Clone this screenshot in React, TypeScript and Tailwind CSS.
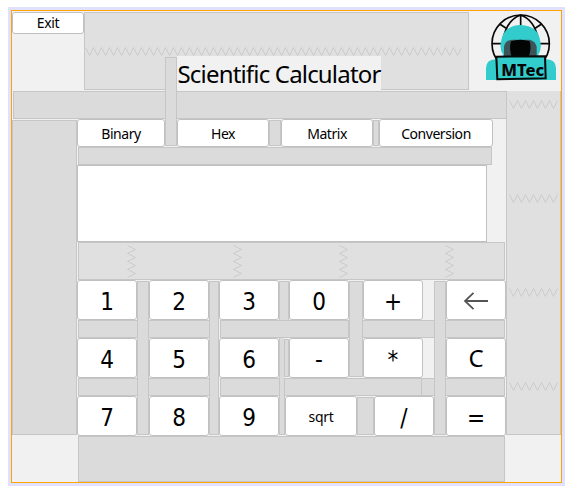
import React from "react";

type SpringProps = { className?: string };

const line = "border-[#c6c6c6]";

/** Horizontal resize spring drawn as a zigzag line. */
function HSpring({ teeth, className = "" }: SpringProps & { teeth: number }) {
  const points: string[] = [];
  for (let i = 0; i <= teeth * 2; i++) {
    points.push(`${i * 4 + 0.5},${i % 2 === 0 ? 0.5 : 8.5}`);
  }
  return (
    <svg className={`block shrink-0 ${className}`} width={teeth * 8 + 1} height={9} fill="none" stroke="#cbcbcb">
      <polyline points={points.join(" ")} />
    </svg>
  );
}

/** Vertical resize spring drawn as a zigzag line. */
function VSpring() {
  return (
    <svg className="block shrink-0" width={9} height={33} fill="none" stroke="#cbcbcb">
      <polyline points="0.5,0.5 8.5,4.5 0.5,8.5 8.5,12.5 0.5,16.5 8.5,20.5 0.5,24.5 8.5,28.5 0.5,32.5" />
    </svg>
  );
}

function Button({ children, className = "" }: { children: React.ReactNode; className?: string }) {
  return (
    <button
      type="button"
      className={`flex shrink-0 items-center justify-center rounded-[3px] border border-[#c0c0c0] bg-white whitespace-nowrap ${className}`}
    >
      {children}
    </button>
  );
}

function Key({ children, className = "w-[60px]" }: { children: React.ReactNode; className?: string }) {
  return (
    <Button
      className={`h-[40px] pt-[3px] font-['DejaVu_Sans_Condensed','DejaVu_Sans',sans-serif] text-[24px] leading-none ${className}`}
    >
      {children}
    </Button>
  );
}

/** Rigid spacer between columns. */
function Strut({ className }: { className: string }) {
  return <div className={`shrink-0 border-x bg-[#dbdbdb] ${line} ${className}`} />;
}

/** Rigid spacer between rows. */
function Strip({ className }: { className: string }) {
  return <div className={`h-[18px] shrink-0 border-y bg-[#dbdbdb] ${line} ${className}`} />;
}

function Logo() {
  return (
    <svg className="mt-px ml-[15px] block" width="74" height="70" viewBox="252 36 222 210">
      <g fill="none" stroke="#080808" strokeWidth="5">
        <circle cx="362" cy="131" r="86" />
        <path d="M276 131H448M362 44V90M362 45C333 55 316 82 309 119M362 45C391 55 408 82 415 119M299 72L322 87M425 72L402 87" />
      </g>
      <path
        d="M258 240V204Q259 179 286 178L310 166Q298 150 303 125Q309 77 362 75Q415 77 421 125Q426 150 414 166L440 178Q467 179 468 204V240Z"
        fill="#33cccc"
      />
      <path d="M312 168V142Q314 122 336 119H388Q407 123 410 142V168Z" fill="#3c5358" />
      <path d="M334 168Q327 140 333 124Q361 114 389 124Q395 140 387 168Z" fill="#030505" />
      <path d="M289 170L435 169L437 235L292 238Z" fill="#33cccc" stroke="#080808" strokeWidth="6" />
      <text
        x="304"
        y="227"
        textLength="129"
        lengthAdjust="spacingAndGlyphs"
        fontFamily="'Noto Sans', sans-serif"
        fontWeight="800"
        fontSize="50"
        fill="#050505"
      >
        MTec
      </text>
    </svg>
  );
}

export default function App() {
  return (
    <div className="h-[499px] w-[566px] bg-white pt-[7px] pl-[8px] font-['Noto_Sans',sans-serif] text-black">
      <div className="h-[479px] w-[557px] border-[3px] border-[#e0e0ff]">
        <div className="h-[473px] w-[551px] border border-[#ffa500] bg-[#f1f1f1]">
          <header className="flex h-[80px]">
            <Button className="mt-px h-[22px] w-[72px] text-[14px] leading-none tracking-[-0.3px]">Exit</Button>
            <div className={`relative mt-px h-[78px] w-[385px] border bg-[#e0e0e0] ${line}`}>
              <HSpring teeth={47} className="mt-[34px]" />
              <h1 className="relative ml-[92px] flex h-[35px] w-[204px] items-center justify-center bg-[#f1f1f1] text-[24px] leading-none tracking-[-0.82px] whitespace-nowrap">
                Scientific Calculator
              </h1>
              <div className={`absolute top-[44px] left-[80px] z-10 h-[89px] w-[12px] border bg-[#dbdbdb] ${line}`} />
            </div>
            <Logo />
          </header>

          <div className="flex h-[345px]">
            <div className="w-[494px]">
              <div className={`ml-px h-[28px] border border-r-0 bg-[#dbdbdb] ${line}`} />
              <div className="flex">
                <div className={`mt-px h-[315px] w-[65px] border bg-[#dbdbdb] ${line}`} />
                <main className="w-[429px]">
                  <nav className="flex h-[28px] text-[14px] leading-none tracking-[-0.45px]">
                    <Button className="w-[88px] pt-px">Binary</Button>
                    <Button className="ml-[12px] w-[92px] pt-px">Hex</Button>
                    <Strut className="my-px w-[12px] border-y" />
                    <Button className="w-[92px] pt-px">Matrix</Button>
                    <Strut className="my-px w-[6px] border-y" />
                    <Button className="w-[114px] pt-px">Conversion</Button>
                  </nav>
                  <Strip className="ml-px w-[414px] border-x" />
                  <div className="h-[77px] w-[410px] border border-[#c0c0c0] bg-white" />
                  <div className={`ml-px flex h-[38px] w-[427px] gap-[97px] border bg-[#e0e0e0] pt-[2px] pl-[48px] ${line}`}>
                    <VSpring />
                    <VSpring />
                    <VSpring />
                    <VSpring />
                  </div>

                  <div className="flex h-[40px]">
                    <Key>1</Key>
                    <Strut className="mt-px w-[12px] border-t" />
                    <Key>2</Key>
                    <Strut className="mt-px w-[10px] border-t" />
                    <Key>3</Key>
                    <Strut className="mt-px w-[10px] border-t" />
                    <Key>0</Key>
                    <Strut className="mt-px w-[14px] border-t" />
                    <Key>+</Key>
                    <Strut className="mt-px ml-[11px] w-[12px] border-t" />
                    <Key>
                      <svg width="26" height="20" viewBox="0 0 26 20" fill="none" stroke="#555" strokeWidth="1.8">
                        <path d="M25 9H2M10.5 0.8L2 9L10.5 17.2" />
                      </svg>
                    </Key>
                  </div>
                  <div className="flex">
                    <Strip className="ml-px w-[59px] border-l" />
                    <Strut className="w-[12px]" />
                    <Strip className="w-[60px]" />
                    <Strut className="w-[10px]" />
                    <Strip className="ml-px w-[129px] border-x" />
                    <Strut className="w-[14px]" />
                    <Strip className="w-[71px]" />
                    <Strut className="w-[12px]" />
                    <Strip className="w-[59px] border-r" />
                  </div>
                  <div className="flex h-[40px]">
                    <Key>4</Key>
                    <Strut className="w-[12px]" />
                    <Key>5</Key>
                    <Strut className="w-[10px]" />
                    <Key>6</Key>
                    <Strut className="w-[5px] border-r-0" />
                    <Strut className="my-px w-[5px] border-y" />
                    <Key>-</Key>
                    <Strut className="mb-px w-[14px] border-b" />
                    <Key>*</Key>
                    <Strut className="ml-[11px] w-[12px]" />
                    <Key>
                      <span className="pb-[3px] font-['Noto_Sans',sans-serif]">C</span>
                    </Key>
                  </div>
                  <div className="flex">
                    <Strip className="ml-px w-[59px] border-l" />
                    <Strut className="w-[12px]" />
                    <Strip className="w-[60px]" />
                    <Strut className="w-[10px]" />
                    <Strip className="ml-px w-[59px] border-l" />
                    <Strut className="w-[6px]" />
                    <Strip className="w-[137px] border-r" />
                    <Strip className="w-[12px]" />
                    <Strut className="w-[12px]" />
                    <Strip className="w-[59px] border-r" />
                  </div>
                  <div className="flex h-[40px]">
                    <Key>7</Key>
                    <Strut className="mb-px w-[12px] border-b" />
                    <Key>8</Key>
                    <Strut className="mb-px w-[10px] border-b" />
                    <Key>9</Key>
                    <Strut className="mb-px w-[6px] border-b" />
                    <Key className="w-[72px]">
                      <span className="pb-[2px] font-['Noto_Sans',sans-serif] text-[14px] tracking-[-0.3px]">sqrt</span>
                    </Key>
                    <Strut className="my-px w-[17px] border-y" />
                    <Key>/</Key>
                    <Strut className="mb-px w-[12px] border-b" />
                    <Key>=</Key>
                  </div>
                </main>
              </div>
            </div>
            <aside
              className={`flex h-[344px] w-[55px] flex-col gap-[85px] border border-t-0 bg-[#e0e0e0] pt-[9px] pl-[2px] ${line}`}
            >
              <HSpring teeth={6} />
              <HSpring teeth={6} />
              <HSpring teeth={6} />
              <HSpring teeth={6} />
            </aside>
          </div>

          <footer className={`ml-[66px] h-[46px] w-[427px] border bg-[#dbdbdb] ${line}`} />
        </div>
      </div>
    </div>
  );
}
